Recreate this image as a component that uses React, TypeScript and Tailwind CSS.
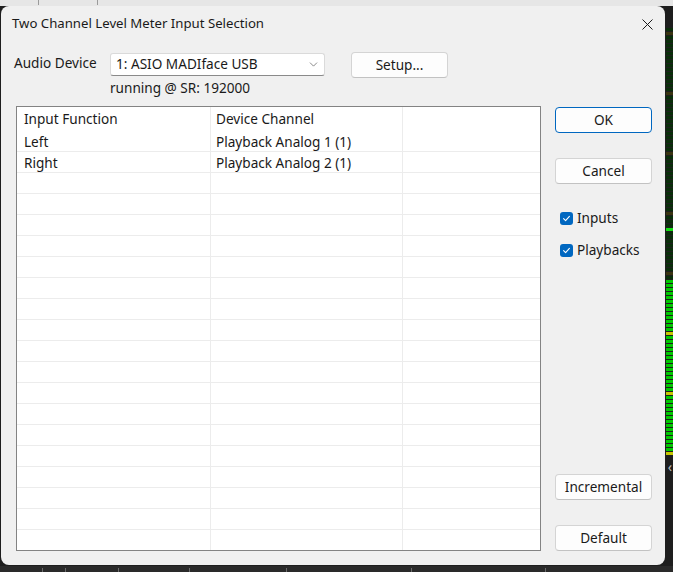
import { ChevronDown } from "lucide-react";

const ROWS = [
  { fn: "Left", ch: "Playback Analog 1 (1)" },
  { fn: "Right", ch: "Playback Analog 2 (1)" },
];

const EMPTY_ROWS = 18;

// meter segments on the right edge of the desktop behind the dialog
const SEGMENTS = Array.from({ length: 107 }, (_, i) => {
  const lit = i >= 63;
  const yellow = i % 15 === 1;
  const peak = i === 50;
  if (peak) return "bg-[#11e011]";
  if (lit) return yellow ? "bg-[#c8c800]" : "bg-[#00c800]";
  return yellow ? "bg-[#3a3410]" : "bg-[#0a2e0a]";
});

function Button({ label, primary = false }: { label: string; primary?: boolean }) {
  return (
    <button
      className={`flex h-[26px] w-[97px] items-center justify-center rounded-[4px] border bg-[#fdfdfd] text-[13.6px] text-[#1a1a1a] ${
        primary ? "border-[#0067c0]" : "border-[#d4d4d4] border-b-[#c2c2c2]"
      }`}
    >
      {label}
    </button>
  );
}

function Check({ label }: { label: string }) {
  return (
    <label className="flex h-[20px] items-center gap-[4px] pl-[5px] text-[13.6px] text-[#1a1a1a]">
      <span className="flex h-[13px] w-[13px] items-center justify-center rounded-[3px] bg-[#0067c0]">
        <svg width="9" height="9" viewBox="0 0 9 9" fill="none">
          <path d="M1.6 4.7 3.6 6.6 7.4 2.4" stroke="white" strokeWidth="1.1" strokeLinecap="round" strokeLinejoin="round" />
        </svg>
      </span>
      {label}
    </label>
  );
}

function Row({ a, b, header = false, last = false }: { a?: string; b?: string; header?: boolean; last?: boolean }) {
  return (
    <div className={`flex shrink-0 ${header ? "h-[24px]" : "h-[21px]"} ${header || last ? "" : "border-b border-[#ececec]"}`}>
      <div className={`flex w-[194px] items-center border-r border-[#ececec] pl-[7px] ${header ? "" : "pt-[2px]"}`}>{a}</div>
      <div className={`flex w-[192px] items-center border-r border-[#ececec] pl-[5px] ${header ? "" : "pt-[2px]"}`}>{b}</div>
      <div className="flex-1" />
    </div>
  );
}

export default function App() {
  return (
    <div className="relative h-[572px] w-[673px] overflow-hidden bg-[#1e1e1e] font-['Noto_Sans',sans-serif]">
      {/* desktop behind: top strip */}
      <div className="absolute inset-x-0 top-0 flex h-[6px] bg-[#e6e6e6]">
        <div className="ml-[38px] h-[5px] w-px bg-[#9a9a9a]" />
        <div className="ml-[58px] h-[5px] w-px bg-[#9a9a9a]" />
      </div>

      {/* desktop behind: level meter */}
      <div className="absolute right-0 top-[28px] flex w-[7px] flex-col gap-[1px]">
        {SEGMENTS.map((c, i) => (
          <div key={i} className={`h-[3px] ${c}`} />
        ))}
      </div>
      <div className="absolute right-[1px] top-[460px] text-[14px] leading-none text-[#bdbdbd]">‹</div>

      {/* desktop behind: bottom strip ticks */}
      <div className="absolute inset-x-0 bottom-0 flex h-[6px] items-end bg-[#2a2a2a]">
        <div className="ml-[42px] h-[4px] w-px bg-[#6a6a6a]" />
        <div className="ml-[22px] h-[4px] w-px bg-[#6a6a6a]" />
        <div className="ml-[52px] h-[4px] w-px bg-[#6a6a6a]" />
        <div className="ml-[70px] h-[4px] w-px bg-[#6a6a6a]" />
        <div className="ml-[96px] h-[4px] w-px bg-[#6a6a6a]" />
        <div className="ml-[124px] h-[4px] w-px bg-[#6a6a6a]" />
        <div className="ml-[133px] h-[4px] w-px bg-[#6a6a6a]" />
      </div>

      {/* dialog window */}
      <div className="absolute left-[1px] top-[6px] flex h-[559px] w-[664px] flex-col rounded-[8px] bg-[#f0f0f0] text-[13.6px] text-[#1a1a1a]">
        {/* title bar */}
        <div className="flex h-[36px] shrink-0 items-center justify-between pl-[11px] pr-[12px]">
          <span className="text-[13.2px]">Two Channel Level Meter Input Selection</span>
          <svg width="11" height="11" viewBox="0 0 11 11">
            <path d="M0.5 0.5 10.5 10.5 M10.5 0.5 0.5 10.5" stroke="#1a1a1a" strokeWidth="1" />
          </svg>
        </div>

        <div className="px-[13px] pt-[10px]">
          {/* device row */}
          <div className="flex h-[26px] items-start">
            <span className="w-[96px] leading-[22px]">Audio Device</span>
            <div className="mt-[1px] flex h-[23px] w-[215px] items-center justify-between rounded-[3px] border border-[#dadada] border-b-[#8a8a8a] bg-white pl-[5px] pr-[4px]">
              <span>1: ASIO MADIface USB</span>
              <ChevronDown size={13} strokeWidth={1.3} color="#5a5a5a" />
            </div>
            <div className="ml-[26px]">
              <Button label="Setup..." />
            </div>
          </div>
          <div className="mt-[1px] pl-[96px] leading-[18px]">running @ SR: 192000</div>

          {/* table + side buttons */}
          <div className="mt-[9px] flex pl-[2px]">
            <div className="flex h-[445px] w-[525px] flex-col overflow-hidden border border-[#838383] bg-white">
              <Row a="Input Function" b="Device Channel" header />
              {ROWS.map((r) => (
                <Row key={r.fn} a={r.fn} b={r.ch} />
              ))}
              {Array.from({ length: EMPTY_ROWS }, (_, i) => (
                <Row key={i} last={i === EMPTY_ROWS - 1} />
              ))}
            </div>

            <div className="ml-[14px] flex w-[97px] flex-col">
              <div className="mt-[1px]">
                <Button label="OK" primary />
              </div>
              <div className="mt-[25px]">
                <Button label="Cancel" />
              </div>
              <div className="mt-[24px]">
                <Check label="Inputs" />
              </div>
              <div className="mt-[12px]">
                <Check label="Playbacks" />
              </div>
              <div className="mt-[214px]">
                <Button label="Incremental" />
              </div>
              <div className="mt-[25px]">
                <Button label="Default" />
              </div>
            </div>
          </div>
        </div>
      </div>
    </div>
  );
}
